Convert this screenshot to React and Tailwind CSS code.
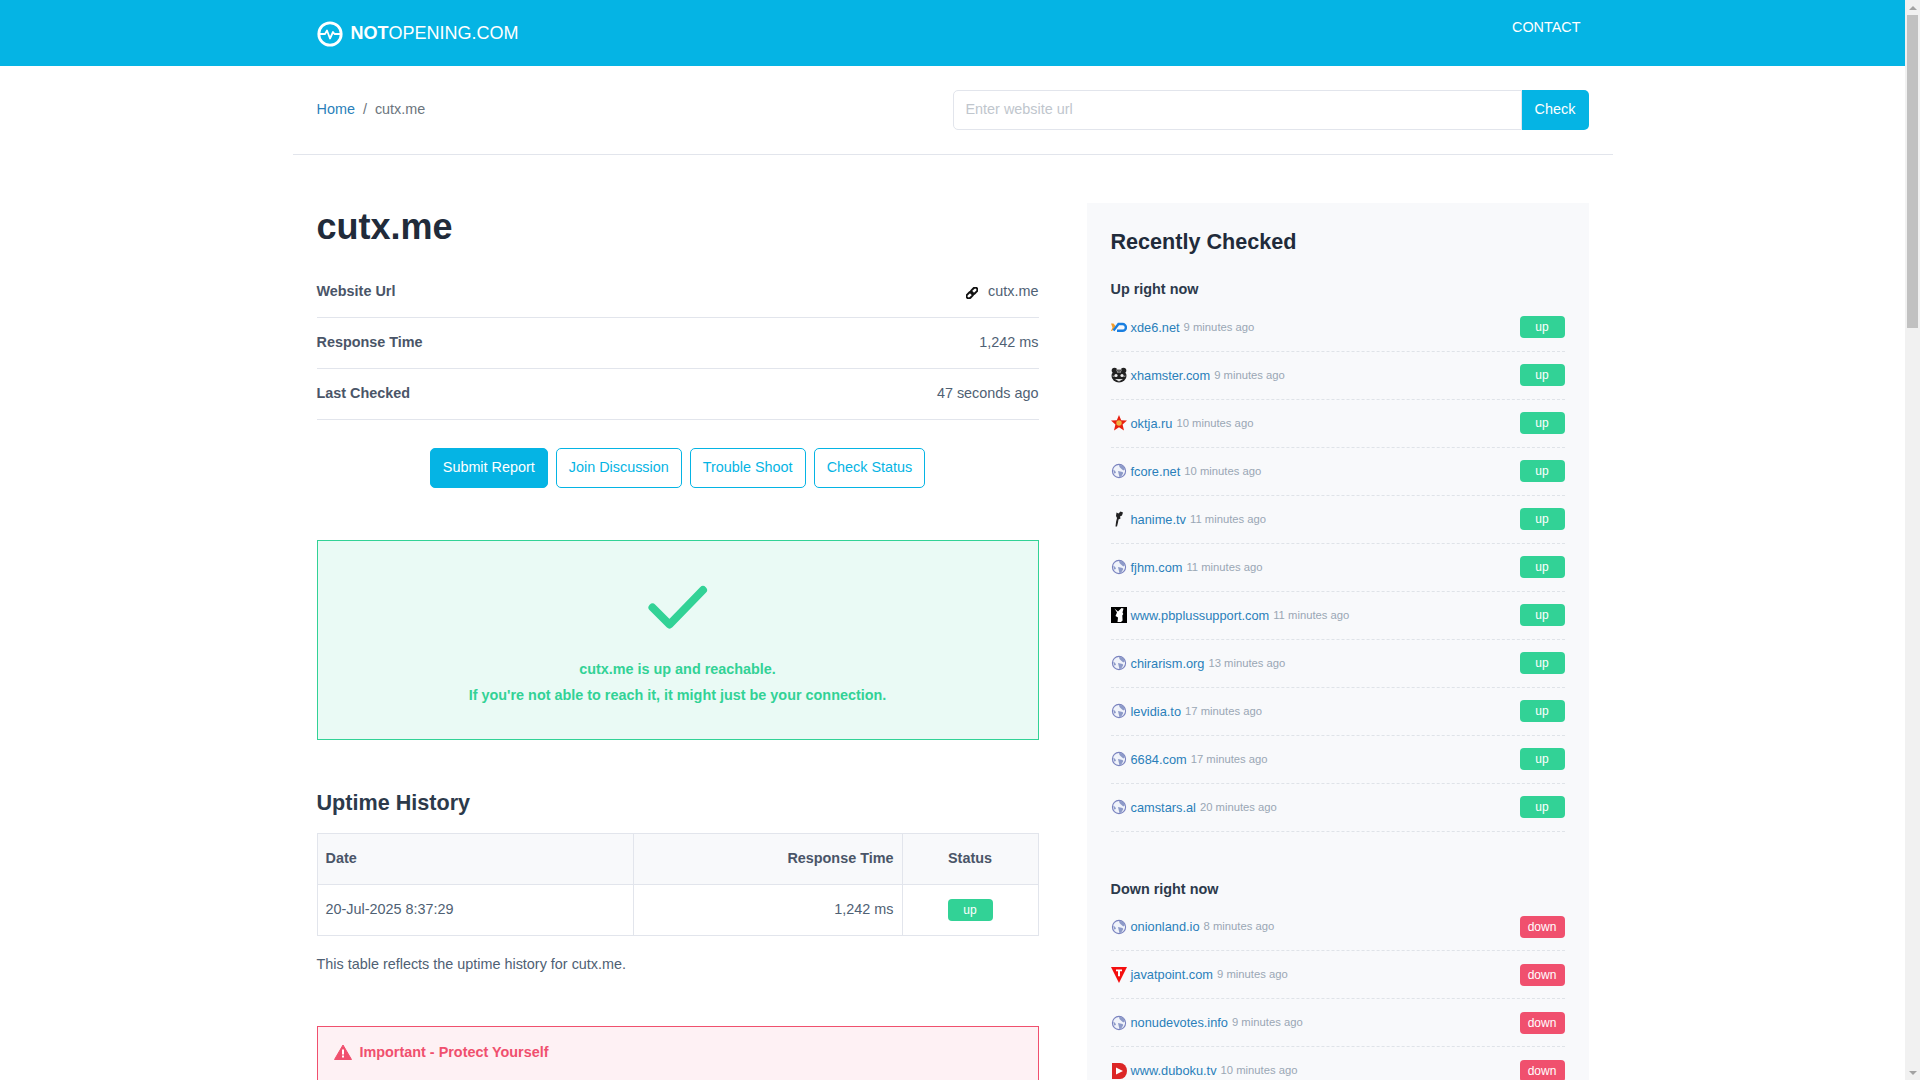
import React from 'react';

const font = 'font-["Liberation_Sans",Arial,sans-serif]';

const upSites = [
  ['xde6.net', '9 minutes ago', 'xde'],
  ['xhamster.com', '9 minutes ago', 'hamster'],
  ['oktja.ru', '10 minutes ago', 'star'],
  ['fcore.net', '10 minutes ago', 'globe'],
  ['hanime.tv', '11 minutes ago', 'fig'],
  ['fjhm.com', '11 minutes ago', 'globe'],
  ['www.pbplussupport.com', '11 minutes ago', 'bunny'],
  ['chirarism.org', '13 minutes ago', 'globe'],
  ['levidia.to', '17 minutes ago', 'globe'],
  ['6684.com', '17 minutes ago', 'globe'],
  ['camstars.al', '20 minutes ago', 'globe'],
];

const downSites = [
  ['onionland.io', '8 minutes ago', 'globe'],
  ['javatpoint.com', '9 minutes ago', 'tee'],
  ['nonudevotes.info', '9 minutes ago', 'globe'],
  ['www.duboku.tv', '10 minutes ago', 'play'],
];

// small favicons
const Favicon = ({ kind }) => {
  if (kind === 'xde')
    return (
      <svg viewBox="0 0 16 16" className="w-4 h-4 shrink-0">
        <path d="M0 4.500h2.500L4.500 7 3 9.500 1 12H0l1.500-3.500z" fill="#f59e2c" />
        <path d="M2.500 11.500L7.500 5h4a3.300 3.300 0 0 1 0 6.800H6" fill="none" stroke="#1a7fe0" strokeWidth="2.400" />
      </svg>
    );
  if (kind === 'hamster')
    return (
      <svg viewBox="0 0 16 16" className="w-4 h-4 shrink-0">
        <circle cx="3.500" cy="3.500" r="2.800" fill="#222" />
        <circle cx="12.500" cy="3.500" r="2.800" fill="#222" />
        <ellipse cx="8" cy="9" rx="7.500" ry="6.500" fill="#222" />
        <path d="M5.500 2.500L7 6M10.500 2.500L9 6M8 2v4M1.500 9l2 .5M14.500 9l-2 .5" stroke="#bbb" strokeWidth="0.800" fill="none" />
        <circle cx="5" cy="8.500" r="1.600" fill="#eee" />
        <circle cx="11" cy="8.500" r="1.600" fill="#eee" />
        <path d="M4 12h8l-4 2.500z" fill="#ddd" />
      </svg>
    );
  if (kind === 'star')
    return (
      <svg viewBox="0 0 16 16" className="w-4 h-4 shrink-0">
        <path d="M8 0l2.200 5.200L16 5.600l-4.400 3.800L13 15.500 8 12.300 3 15.500l1.400-6.100L0 5.600l5.800-.4z" fill="#e8200f" />
        <circle cx="8" cy="8" r="2.700" fill="#f0b040" />
      </svg>
    );
  if (kind === 'fig')
    return (
      <svg viewBox="0 0 16 16" className="w-4 h-4 shrink-0">
        <path d="M5.500 1.500l2 1 2-2 2.500 1-1 3-2 1 .5 2-2 1-.5 3-1 4H4.500l.6-5 .9-3.500-1-2z" fill="#222" />
      </svg>
    );
  if (kind === 'bunny')
    return (
      <svg viewBox="0 0 16 16" className="w-4 h-4 shrink-0">
        <rect width="16" height="16" fill="#000" />
        <path d="M3.500 1.500L7 4.500 10.500 1l2 .5-1 4 .8 1.500-1 1.500.3 5-1.600 1.500H6.500l.5-4.500-2.500-1.500L6 5.500z" fill="#fff" />
      </svg>
    );
  if (kind === 'tee')
    return (
      <svg viewBox="0 0 16 16" className="w-4 h-4 shrink-0">
        <path d="M0 0h16L8 16z" fill="#f40f0f" />
        <path d="M5 2.500h6v1.800H9v5H7v-5H5z" fill="#fff" />
      </svg>
    );
  if (kind === 'play')
    return (
      <svg viewBox="0 0 16 16" className="w-4 h-4 shrink-0">
        <path d="M1 0h8a7 8 0 0 1 0 16H1z" fill="#dc2626" />
        <path d="M5 4.500l7 3.500-7 3.500z" fill="#fff" />
      </svg>
    );
  return (
    <svg viewBox="0 0 16 16" className="w-4 h-4 shrink-0">
      <circle cx="8" cy="8" r="6.600" fill="#f0f3fa" stroke="#7a83bf" strokeWidth="1.100" />
      <path d="M8 1.800l3.500.700 2.800 3.500-2 1.500L10 5.500 8.500 4zM7 8l4.500 1 .8 1-2 3.500-1.800.800-.800-3.300zM2.200 6.500l2 1.500.800 2-2 .500z" fill="#8d9ac8" />
    </svg>
  );
};

const SiteRow = ({ site, badge }) => (
  <div className="h-12 flex items-center justify-between border-b border-dashed border-[#dfe3e8]">
    <div className="flex items-center">
      <Favicon kind={site[2]} />
      <a className="ml-1 text-[12.800px] text-[#2a7fba]">{site[0]}</a>
      <span className="ml-1 text-[11.264px] text-[#9aa7b5]">{site[1]}</span>
    </div>
    {badge === 'up' ? (
      <span className="w-[45px] h-[22px] flex items-center justify-center rounded-[4px] bg-[#32d296] text-white text-xs">up</span>
    ) : (
      <span className="w-[45px] h-[22px] flex items-center justify-center rounded-[4px] bg-[#f0506e] text-white text-xs">down</span>
    )}
  </div>
);

const InfoRow = ({ label, children }) => (
  <div className="h-[51px] flex items-center justify-between border-b border-[#e2e5ec] text-[#4f6174]">
    <span className="font-bold text-[#4a5568]">{label}</span>
    <span className="flex items-center">{children}</span>
  </div>
);

const OutlineBtn = ({ children }) => (
  <a className="h-10 flex items-center px-3 border border-[#05b4e4] rounded-[5px] text-[#05b4e4]">{children}</a>
);

const Scrollbar = () => (
  <div className="w-[15px] shrink-0 bg-[#f1f1f1] flex flex-col items-center justify-between">
    <div className="h-[15px] flex items-center justify-center">
      <svg viewBox="0 0 8 4" className="w-2 h-1" fill="#a3a3a3">
        <path d="M4 0l4 4H0z" />
      </svg>
    </div>
    <div className="w-[11px] h-[313px] bg-[#c1c1c1] mb-auto" />
    <div className="h-[15px] flex items-center justify-center">
      <svg viewBox="0 0 8 4" className="w-2 h-1" fill="#a3a3a3">
        <path d="M4 4l4-4H0z" />
      </svg>
    </div>
  </div>
);

export default function App() {
  return (
    <div className={`${font} text-[14.400px] bg-white flex h-screen overflow-hidden`}>
      <div className="flex-1 min-w-0">
        <header className="h-[66px] bg-[#05b4e4]">
          <div className="w-[1320px] mx-auto px-6 flex justify-between">
            <a className="flex items-center h-[66px] text-white text-[18px]">
              <svg viewBox="0 0 26 26" className="w-[26px] h-[26px] mr-2 mt-[2px]" fill="none" stroke="#fff">
                <circle cx="13" cy="13" r="11.200" strokeWidth="2.800" />
                <path d="M2 13h6l2-3.500 3 8 3-6.500 1.500 2H24" strokeWidth="1.800" strokeLinejoin="round" />
              </svg>
              <b>NOT</b>OPENING.COM
            </a>
            <a className="text-white pt-[17px] pr-2">CONTACT</a>
          </div>
        </header>

        <div className="w-[1320px] mx-auto px-6 h-[89px] flex items-center justify-between border-b border-[#e2e5ec]">
          <div className="flex items-center">
            <a className="text-[#2a7fba]">Home</a>
            <span className="mx-2 text-[#6c757d]">/</span>
            <span className="text-[#6c757d]">cutx.me</span>
          </div>
          <div className="flex w-[636px] h-10">
            <input
              placeholder="Enter website url"
              className="flex-1 px-3 border border-[#e2e5ec] rounded-l-[5px] placeholder-[#c0c6cd] outline-none"
            />
            <button className="w-[67px] bg-[#05b4e4] text-white rounded-r-[5px]">Check</button>
          </div>
        </div>

        <div className="w-[1320px] mx-auto px-6 pt-12 flex justify-between items-start">
          <main className="w-[722px]">
            <h1 className="text-[36px] leading-[48px] font-bold text-[#212b3a] mb-4">cutx.me</h1>
            <InfoRow label="Website Url">
              <svg viewBox="0 0 16 16" className="w-3 h-3 mr-[10px] mt-[2px]" fill="none" stroke="#111" strokeWidth="2.600">
                <g transform="rotate(-45 8 8)">
                  <rect x="-1" y="5" width="10" height="6" rx="3" />
                  <rect x="7" y="5" width="10" height="6" rx="3" />
                </g>
              </svg>
              <span>cutx.me</span>
            </InfoRow>
            <InfoRow label="Response Time">1,242 ms</InfoRow>
            <InfoRow label="Last Checked">47 seconds ago</InfoRow>

            <div className="flex justify-center gap-2 mt-7">
              <a className="h-10 flex items-center px-3 border border-[#05b4e4] rounded-[5px] bg-[#05b4e4] text-white">Submit Report</a>
              <OutlineBtn>Join Discussion</OutlineBtn>
              <OutlineBtn>Trouble Shoot</OutlineBtn>
              <OutlineBtn>Check Status</OutlineBtn>
            </div>

            <div className="mt-[52px] h-[200px] border border-[#32d296] bg-[#eafaf5] flex flex-col items-center text-[#32d296] font-bold">
              <svg viewBox="0 0 60 44" className="w-[60px] h-[44px] mt-[44px]" fill="none" stroke="#32d296" strokeWidth="8" strokeLinecap="round" strokeLinejoin="round">
                <path d="M4.500 22.500L21.500 39.500 55 5" />
              </svg>
              <p className="mt-[30px]">cutx.me is up and reachable.</p>
              <p className="mt-1">If you're not able to reach it, it might just be your connection.</p>
            </div>

            <h2 className="mt-[47px] text-[21.600px] leading-8 font-bold text-[#2c3a4b]">Uptime History</h2>

            <table className="mt-[14px] w-full border-collapse text-[#4f6174]">
              <thead>
                <tr className="h-[51px] font-bold text-[#4a5568] bg-[#f8f9fb]">
                  <th className="w-[316px] border border-[#e2e5ec] px-2 text-left">Date</th>
                  <th className="border border-[#e2e5ec] px-2 text-right">Response Time</th>
                  <th className="w-[136px] border border-[#e2e5ec] px-2 text-center">Status</th>
                </tr>
              </thead>
              <tbody>
                <tr className="h-[51px]">
                  <td className="border border-[#e2e5ec] px-2">20-Jul-2025 8:37:29</td>
                  <td className="border border-[#e2e5ec] px-2 text-right">1,242 ms</td>
                  <td className="border border-[#e2e5ec] px-2">
                    <span className="mx-auto w-[45px] h-[22px] flex items-center justify-center rounded-[4px] bg-[#32d296] text-white text-xs">up</span>
                  </td>
                </tr>
              </tbody>
            </table>

            <p className="mt-[18px] text-[#4f6174]">This table reflects the uptime history for cutx.me.</p>

            <div className="mt-[50px] h-[300px] border border-[#f0506e] bg-[#fef1f4] px-4 pt-[15px]">
              <div className="flex items-center font-bold text-[#f0506e]">
                <svg viewBox="0 0 18 16" className="w-[18px] h-4 mr-2">
                  <path d="M9 1L17.500 15.500H.500z" fill="#f0506e" stroke="#f0506e" strokeLinejoin="round" />
                  <path d="M8 5.500h2v5H8zM8 11.500h2v2H8z" fill="#fff" />
                </svg>
                Important - Protect Yourself
              </div>
            </div>
          </main>

          <aside className="w-[502px] bg-[#f8f9fb] px-6 pt-[23px] pb-6">
            <h3 className="text-[21.600px] leading-8 font-bold text-[#212b3a]">Recently Checked</h3>
            <h4 className="mt-[21px] font-bold text-[#2c3a4b]">Up right now</h4>
            <div className="mt-[3px]">
              {upSites.map((s) => (
                <SiteRow key={s[0]} site={s} badge="up" />
              ))}
            </div>
            <h4 className="mt-[47px] font-bold text-[#2c3a4b]">Down right now</h4>
            <div className="mt-[3px]">
              {downSites.map((s) => (
                <SiteRow key={s[0]} site={s} badge="down" />
              ))}
            </div>
          </aside>
        </div>
      </div>
      <Scrollbar />
    </div>
  );
}
